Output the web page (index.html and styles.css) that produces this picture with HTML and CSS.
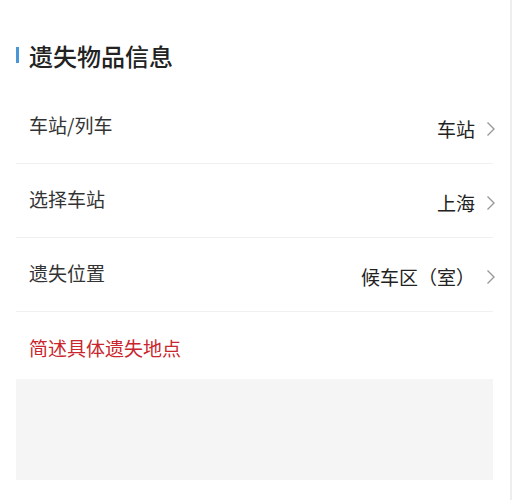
FILE: index.html
```html
<!doctype html>
<html>
	<head>
		<meta http-equiv="Content-Type" content="text/html; charset=utf-8">
		<title>遗失物品信息</title>
		<link rel="stylesheet" href="styles.css">
	</head>
<body>
	<div class="page">
		<div class="title"><i class="bar"></i>遗失物品信息</div>

		<div class="row">
			<span class="label">车站/列车</span>
			<span class="value">车站<svg class="arrow" width="10" height="16" viewBox="0 0 10 16"><polyline points="1.5,1.5 8,8 1.5,14.5" fill="none" stroke="#999" stroke-width="1.4"/></svg></span>
		</div>
		<div class="row">
			<span class="label">选择车站</span>
			<span class="value">上海<svg class="arrow" width="10" height="16" viewBox="0 0 10 16"><polyline points="1.5,1.5 8,8 1.5,14.5" fill="none" stroke="#999" stroke-width="1.4"/></svg></span>
		</div>
		<div class="row">
			<span class="label">遗失位置</span>
			<span class="value">候车区（室）<svg class="arrow" width="10" height="16" viewBox="0 0 10 16"><polyline points="1.5,1.5 8,8 1.5,14.5" fill="none" stroke="#999" stroke-width="1.4"/></svg></span>
		</div>

		<div class="tip">简述具体遗失地点</div>
		<div class="textbox"></div>
	</div>
</body>
</html>
```

FILE: styles.css
```css
*{margin:0;padding:0;box-sizing:border-box;}
body{font-family:"Noto Sans CJK SC","Noto Sans",sans-serif;background:#fff;color:#333;}
.page{width:512px;height:500px;border-right:2px solid #eee;padding:40px 17px 0 16px;}
.title{display:flex;align-items:center;height:30px;font-size:24px;font-weight:500;color:#222;margin-bottom:20px;}
.title .bar{display:block;width:3px;height:16px;background:#4a97d8;margin-right:10px;}
.row{display:flex;justify-content:space-between;align-items:center;height:74px;border-bottom:1px solid #f0f0f0;padding-left:13px;font-size:19px;}
.row .label{color:#333;margin-top:-4px;}
.row .value{display:flex;align-items:center;color:#222;margin-top:4px;margin-right:-3px;}
.row .arrow{margin-left:11px;}
.tip{font-size:19px;color:#c9262d;padding:22px 0 0 13px;height:67px;}
.textbox{height:101px;background:#f5f5f5;}
```
